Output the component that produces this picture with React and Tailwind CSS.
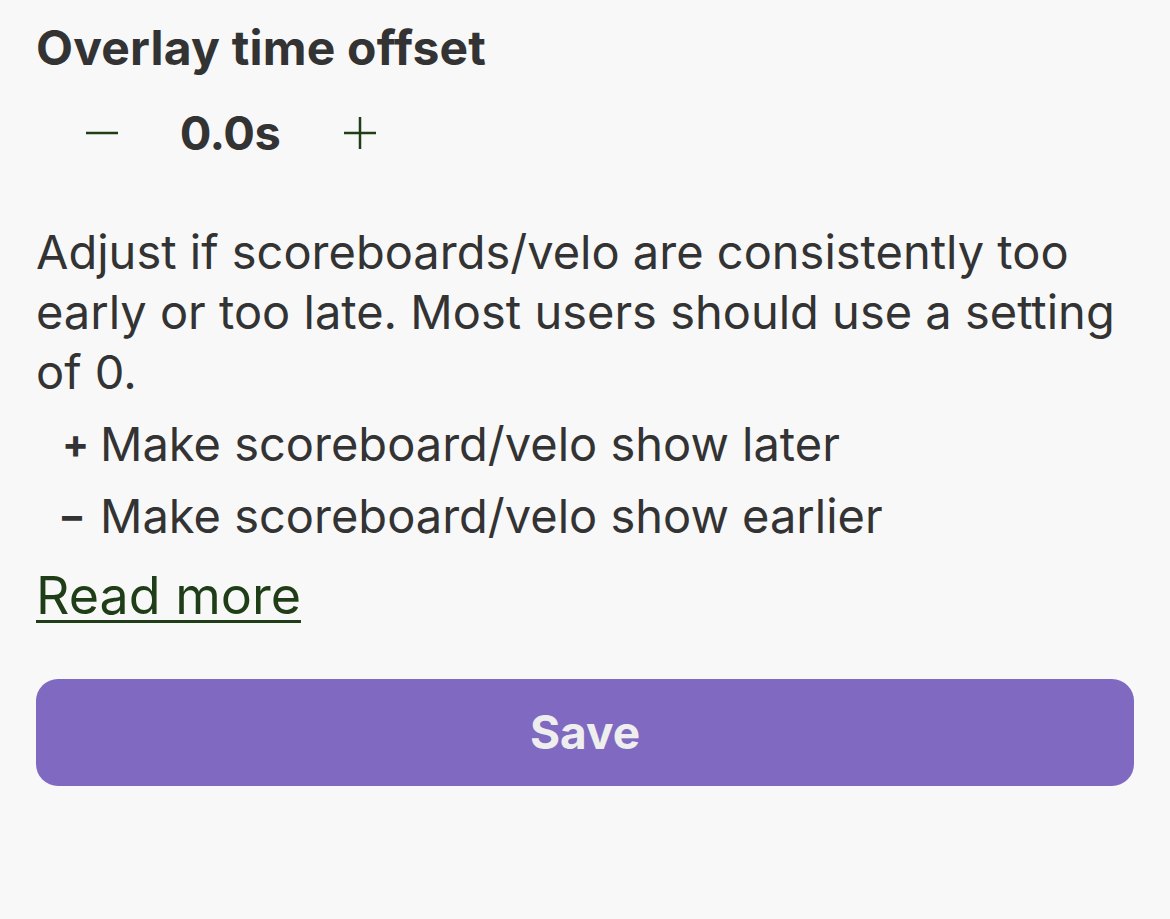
import React, { useState } from "react";

const App = () => {
  const [offset, setOffset] = useState(0);

  return (
    <div className="min-h-screen w-full bg-[#f8f8f8] text-[#333333] font-['Inter','Noto_Sans',sans-serif] px-[36px] pt-[20px]">
      {/* Title */}
      <h2 className="text-[48px] font-bold leading-[56px] tracking-[0.2px]">Overlay time offset</h2>

      {/* Stepper */}
      <div className="flex items-center mt-[29px] h-[56px]">
        <button
          onClick={() => setOffset((o) => o - 0.1)}
          className="w-[131px] h-[56px] flex items-center justify-center text-[#1f3d16]"
        >
          <svg width="32" height="4" viewBox="0 0 32 4"><rect width="32" height="2.5" y="0.75" fill="currentColor" /></svg>
        </button>
        <span className="text-[47px] font-bold w-[126px] text-center tracking-[-0.5px]">{offset.toFixed(1)}s</span>
        <button
          onClick={() => setOffset((o) => o + 0.1)}
          className="w-[134px] h-[56px] flex items-center justify-center text-[#1f3d16]"
        >
          <svg width="32" height="32" viewBox="0 0 32 32">
            <rect x="0" y="14.75" width="32" height="2.5" fill="currentColor" />
            <rect x="14.75" y="0" width="2.5" height="32" fill="currentColor" />
          </svg>
        </button>
      </div>

      {/* Description */}
      <p className="mt-[61px] w-[1100px] text-[47px] leading-[60px]">
        Adjust if scoreboards/velo are consistently too early or too late. Most users should use a setting of 0.
      </p>
      <ul className="mt-[6px] text-[47px] leading-[72px]">
        <li className="flex items-center pl-[26px]"><span className="font-bold text-[40px] w-[38px]">+</span>Make scoreboard/velo show later</li>
        <li className="flex items-center pl-[26px]"><span className="font-bold text-[40px] w-[38px]">–</span>Make scoreboard/velo show earlier</li>
      </ul>
      <a href="#" className="block w-fit mt-[14px] text-[52px] leading-[60px] text-[#1f3d16] underline underline-offset-[6px] decoration-[3px]">Read more</a>

      {/* Save */}
      <button className="mt-[53px] w-full h-[107px] rounded-[22px] bg-[#8069c0] text-[#eeeeee] text-[46px] font-bold">
        Save
      </button>
    </div>
  );
};

export default App;
